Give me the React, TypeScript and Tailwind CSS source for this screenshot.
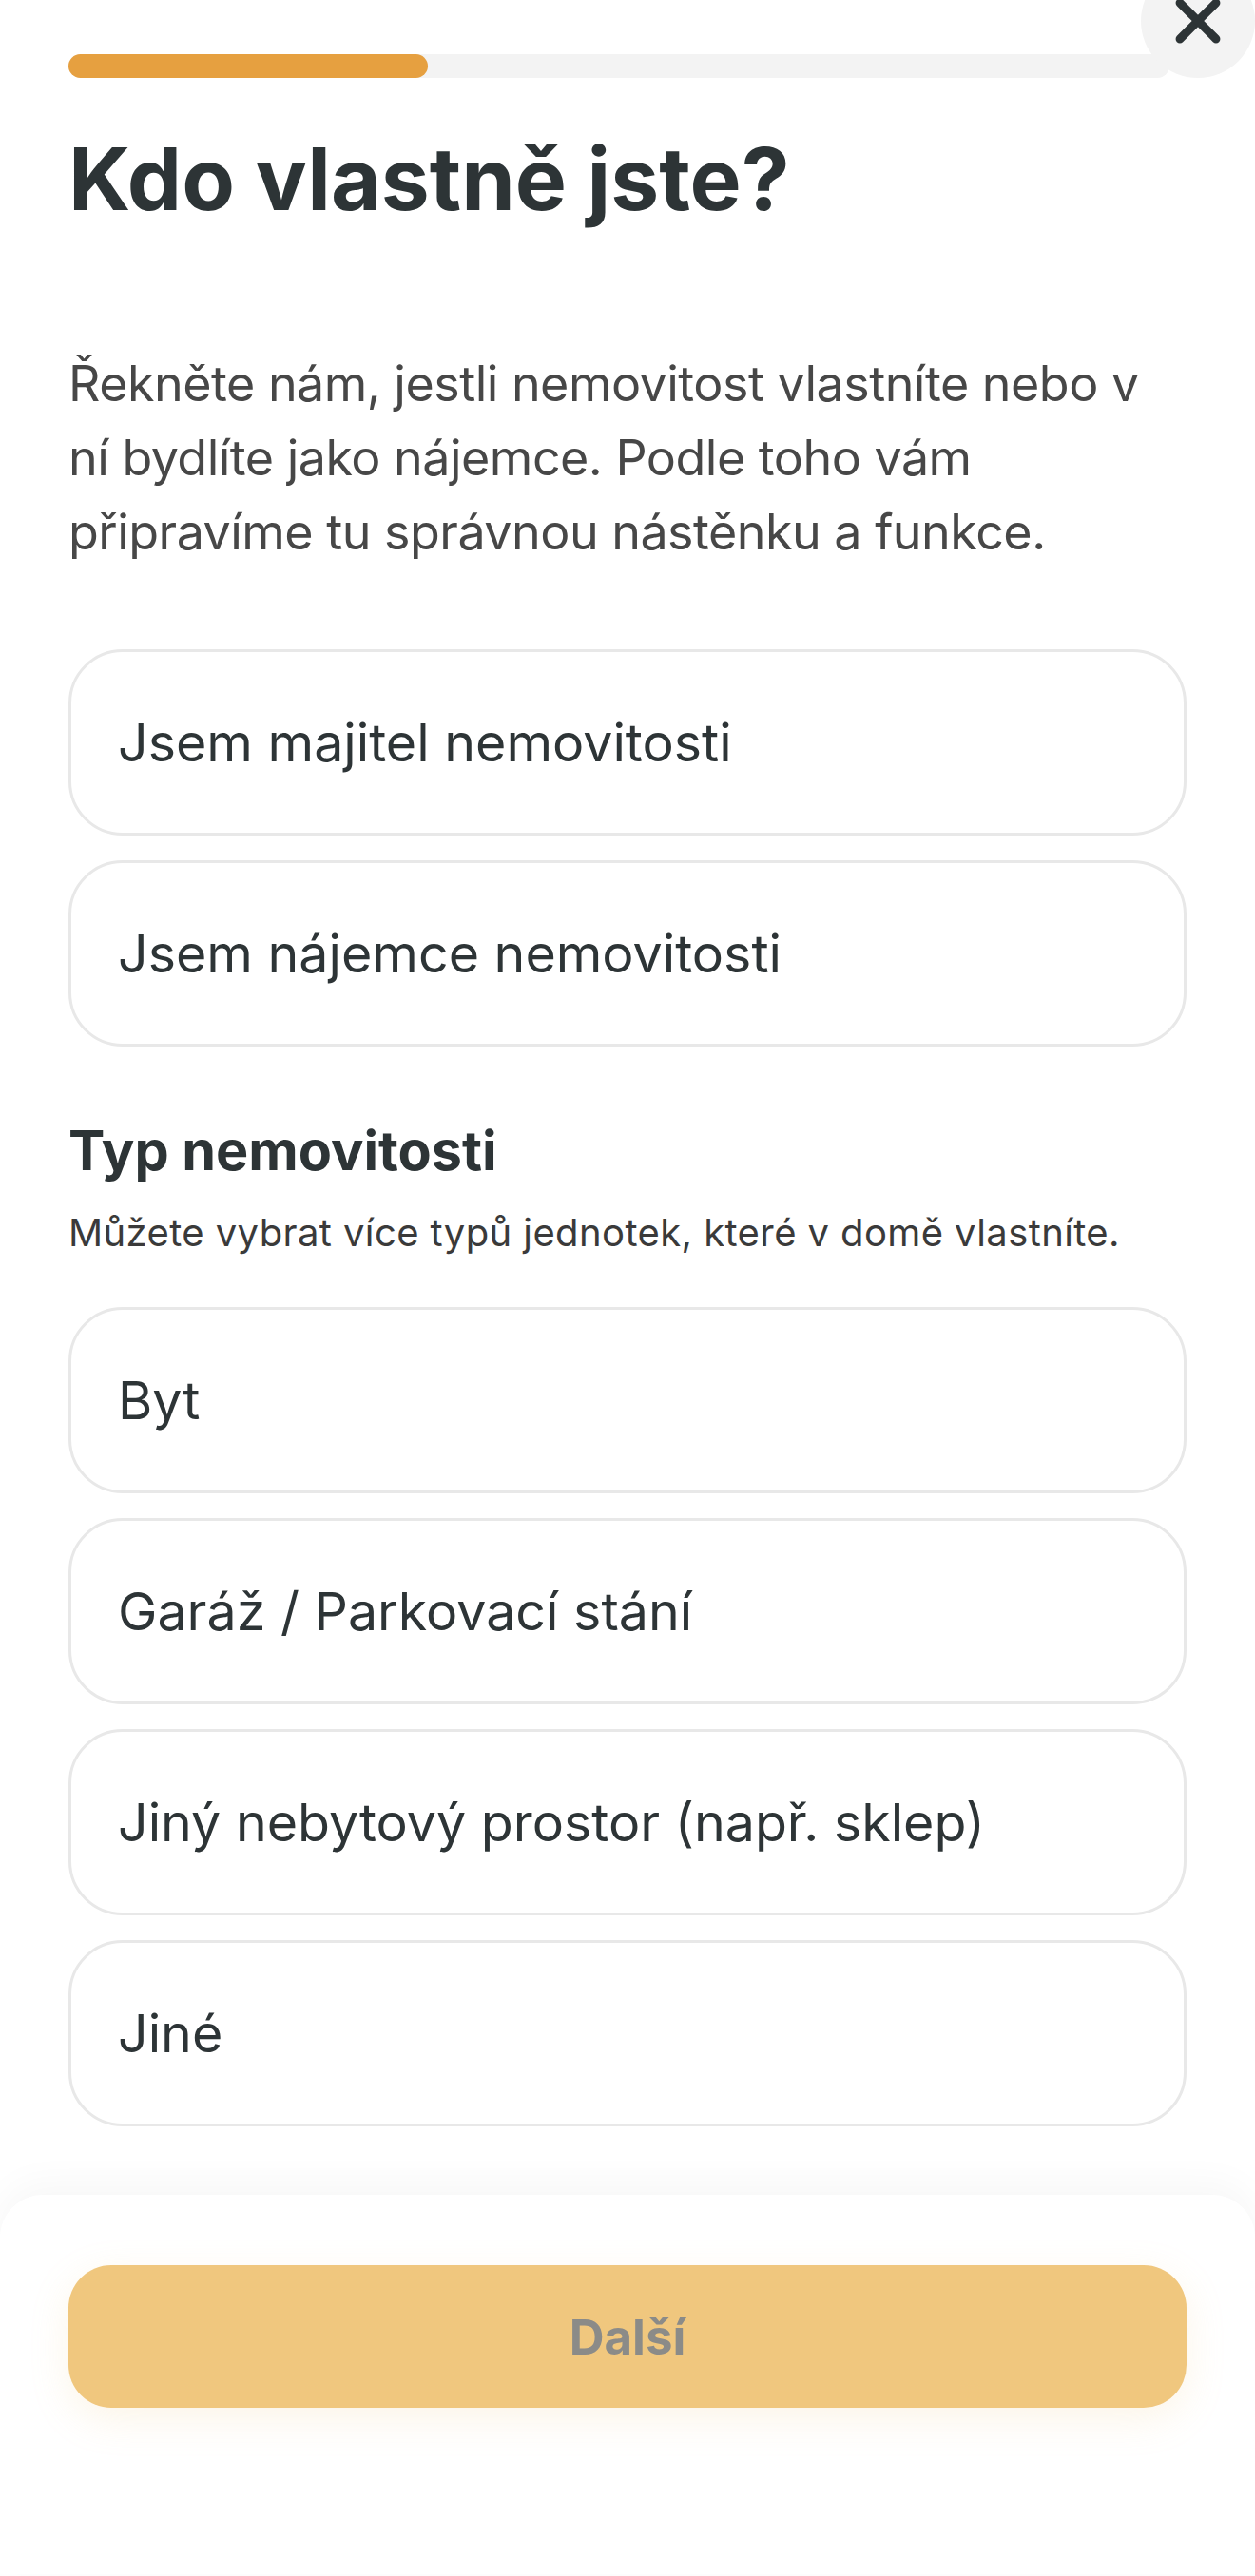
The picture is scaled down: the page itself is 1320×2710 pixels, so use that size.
import React, { useState } from "react";

const ownership = ["Jsem majitel nemovitosti", "Jsem nájemce nemovitosti"];
const unitTypes = ["Byt", "Garáž / Parkovací stání", "Jiný nebytový prostor (např. sklep)", "Jiné"];

function OptionCard({ label, selected, onClick }: { label: string; selected: boolean; onClick: () => void }) {
  return (
    <button
      onClick={onClick}
      className={`h-[196px] w-full flex items-center text-left pl-[49px] rounded-[57px] border-[3px] bg-white ${
        selected ? "border-[#E6A040]" : "border-[#e8e8e8]"
      }`}
    >
      <span className="text-[55.5px] leading-none text-[#2d3436]">{label}</span>
    </button>
  );
}

export default function App() {
  const [role, setRole] = useState<string | null>(null);
  const [types, setTypes] = useState<string[]>([]);

  const toggleType = (t: string) =>
    setTypes((prev) => (prev.includes(t) ? prev.filter((x) => x !== t) : [...prev, t]));

  const ready = role !== null && types.length > 0;

  return (
    <div className="relative min-h-[2710px] w-[1320px] bg-white overflow-hidden font-['Inter','Noto_Sans',sans-serif]">
      {/* Close button */}
      <button className="absolute top-[-38px] right-0 w-[120px] h-[120px] rounded-full bg-[#f3f3f3] flex items-center justify-center z-10">
        <svg width="76" height="76" viewBox="0 0 24 24" fill="none" stroke="#2d3436" strokeWidth="2.8" strokeLinecap="round">
          <path d="M18 6 6 18" />
          <path d="m6 6 12 12" />
        </svg>
      </button>

      <main className="px-[72px] pt-[57px]">
        {/* Progress */}
        <div className="h-[25px] w-[1158px] rounded-full bg-[#f3f3f3]">
          <div className="h-full w-[378px] rounded-full bg-[#E6A040]" />
        </div>

        <h1 className="mt-[52px] text-[91px] leading-[1.2] font-bold text-[#2d3436]">Kdo vlastně jste?</h1>

        <p className="mt-[122px] max-w-[1165px] text-[52px] leading-[78px] text-[#474747] tracking-[-0.01em]">
          Řekněte nám, jestli nemovitost vlastníte nebo v ní bydlíte jako nájemce. Podle toho vám připravíme tu
          správnou nástěnku a funkce.
        </p>

        <div className="mt-[84px] flex flex-col gap-[26px]">
          {ownership.map((o) => (
            <OptionCard key={o} label={o} selected={role === o} onClick={() => setRole(o)} />
          ))}
        </div>

        <h2 className="mt-[75px] text-[57.5px] leading-[1.2] font-bold text-[#2d3436]">Typ nemovitosti</h2>
        <p className="mt-[28px] text-[40px] leading-[48px] text-[#3a3a3a] tracking-[0.01em]">
          Můžete vybrat více typů jednotek, které v domě vlastníte.
        </p>

        <div className="mt-[54px] flex flex-col gap-[26px]">
          {unitTypes.map((t) => (
            <OptionCard key={t} label={t} selected={types.includes(t)} onClick={() => toggleType(t)} />
          ))}
        </div>
      </main>

      {/* Bottom sheet */}
      <footer className="mt-[72px] bg-white rounded-t-[45px] shadow-[0_-12px_40px_rgba(0,0,0,0.035)] px-[72px] pt-[74px] pb-[175px]">
        <button
          disabled={!ready}
          className={`h-[150px] w-full rounded-[45px] flex items-center justify-center shadow-[0_12px_40px_rgba(240,199,126,0.18)] ${
            ready ? "bg-[#E6A040] text-white" : "bg-[#F0C77E] text-[#8b8b88]"
          }`}
        >
          <span className="text-[51px] font-bold leading-none">Další</span>
        </button>
      </footer>
    </div>
  );
}
